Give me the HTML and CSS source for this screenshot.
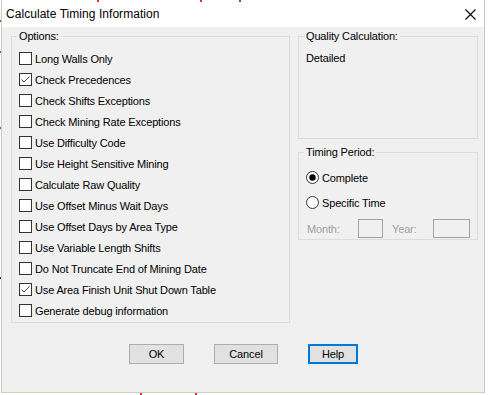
FILE: index.html
```html
<!DOCTYPE html>
<html lang="en">
<head>
    <meta charset="UTF-8">
    <meta name="viewport" content="width=device-width, initial-scale=1.0">
    <title>Calculate Timing Information</title>
    <link rel="stylesheet" href="styles.css">
</head>
<body>
    <div class="window">
        <div class="titlebar">
            <span class="title">Calculate Timing Information</span>
            <svg class="close" width="11" height="11" viewBox="0 0 11 11">
                <path d="M0.5 0.5 L10.5 10.5 M10.5 0.5 L0.5 10.5" stroke="#000" stroke-width="1.1" fill="none"/>
            </svg>
        </div>
        <div class="client">
            <div class="columns">
                <div class="group options">
                    <span class="group-title">Options:</span>
                    <div class="check-row"><span class="box"></span>Long Walls Only</div>
                    <div class="check-row"><span class="box checked"><svg width="11" height="11" viewBox="0 0 11 11"><path d="M1.5 5.5 L4 8 L9.5 2.5" stroke="#444" stroke-width="1" fill="none"/></svg></span>Check Precedences</div>
                    <div class="check-row"><span class="box"></span>Check Shifts Exceptions</div>
                    <div class="check-row"><span class="box"></span>Check Mining Rate Exceptions</div>
                    <div class="check-row"><span class="box"></span>Use Difficulty Code</div>
                    <div class="check-row"><span class="box"></span>Use Height Sensitive Mining</div>
                    <div class="check-row"><span class="box"></span>Calculate Raw Quality</div>
                    <div class="check-row"><span class="box"></span>Use Offset Minus Wait Days</div>
                    <div class="check-row"><span class="box"></span>Use Offset Days by Area Type</div>
                    <div class="check-row"><span class="box"></span>Use Variable Length Shifts</div>
                    <div class="check-row"><span class="box"></span>Do Not Truncate End of Mining Date</div>
                    <div class="check-row"><span class="box checked"><svg width="11" height="11" viewBox="0 0 11 11"><path d="M1.5 5.5 L4 8 L9.5 2.5" stroke="#444" stroke-width="1" fill="none"/></svg></span>Use Area Finish Unit Shut Down Table</div>
                    <div class="check-row"><span class="box"></span>Generate debug information</div>
                </div>
                <div class="side">
                    <div class="group quality">
                        <span class="group-title">Quality Calculation:</span>
                        <div class="quality-value">Detailed</div>
                    </div>
                    <div class="group timing">
                        <span class="group-title">Timing Period:</span>
                        <div class="radio-row">
                            <svg class="radio" width="13" height="13" viewBox="0 0 13 13">
                                <circle cx="6.5" cy="6.5" r="6" fill="#fff" stroke="#333" stroke-width="1"/>
                                <circle cx="6.5" cy="6.5" r="3.2" fill="#000"/>
                            </svg>
                            Complete
                        </div>
                        <div class="radio-row">
                            <svg class="radio" width="13" height="13" viewBox="0 0 13 13">
                                <circle cx="6.5" cy="6.5" r="6" fill="#fff" stroke="#333" stroke-width="1"/>
                            </svg>
                            Specific Time
                        </div>
                        <div class="period-row">
                            <span class="period-label month">Month:</span>
                            <span class="period-box small"></span>
                            <span class="period-label year">Year:</span>
                            <span class="period-box wide"></span>
                        </div>
                    </div>
                </div>
            </div>
            <div class="buttons">
                <button class="btn btn-ok">OK</button>
                <button class="btn btn-cancel">Cancel</button>
                <button class="btn btn-help">Help</button>
            </div>
        </div>
    </div>
    <span class="tick red" style="left:0;top:20px"></span>
    <span class="tick red" style="left:0;top:51px"></span>
    <span class="tick red" style="left:0;top:127px"></span>
    <span class="tick dark" style="left:0;top:277px"></span>
    <span class="tick-h red" style="left:97px;top:0"></span>
    <span class="tick-h red" style="left:200px;top:0"></span>
    <span class="tick-h red" style="left:239px;top:0"></span>
    <span class="tick-h red" style="left:140px;top:393px"></span>
    <span class="tick-h red" style="left:195px;top:393px"></span>
</body>
</html>
```

FILE: styles.css
```css
*{
    margin: 0;
    padding: 0;
    box-sizing: border-box;
}
body{
    background-color: #fff;
    font-family: "Liberation Sans", Arial, sans-serif;
    font-size: 11px;
    color: #000;
    position: relative;
    height: 395px;
    overflow: hidden;
}
.window{
    margin-left: 1px;
    width: 484px;
    height: 393px;
    border-left: 1px solid #c6cfbd;
    border-right: 1px solid #c3ccb9;
    border-bottom: 1px solid #c6d1b6;
    background-color: #f0f0f0;
    display: flex;
    flex-direction: column;
}
.titlebar{
    height: 27px;
    background-color: #fff;
    display: flex;
    align-items: center;
    justify-content: space-between;
    padding: 0 8px 0 4px;
}
.title{
    font-size: 12px;
    letter-spacing: 0.05px;
}
.close{
    display: block;
    margin-top: 1px;
}
.client{
    flex: 1;
    padding: 9px 6px 0 9px;
}
.columns{
    display: flex;
    column-gap: 8px;
}
.group{
    position: relative;
    border: 1px solid #dcdcdc;
    letter-spacing: -0.15px;
}
.group-title{
    position: absolute;
    top: -7px;
    left: 5px;
    padding: 0 2px;
    line-height: 13px;
    background-color: #f0f0f0;
}
.options{
    width: 279px;
    height: 287px;
    padding: 11px 0 0 7px;
}
.check-row{
    height: 21px;
    display: flex;
    align-items: center;
    column-gap: 3px;
    white-space: nowrap;
}
.box{
    width: 13px;
    height: 13px;
    border: 1px solid #333;
    background-color: #fff;
    flex-shrink: 0;
}
.box svg{
    display: block;
}
.side{
    width: 180px;
    display: flex;
    flex-direction: column;
    row-gap: 13px;
}
.quality{
    height: 103px;
    padding: 11px 0 0 7px;
}
.quality-value{
    line-height: 21px;
}
.timing{
    height: 88px;
    padding: 12px 0 0 7px;
}
.radio-row{
    height: 25px;
    display: flex;
    align-items: center;
    column-gap: 3px;
}
.radio{
    display: block;
    flex-shrink: 0;
}
.period-row{
    margin-top: 4px;
    height: 19px;
    display: flex;
    align-items: center;
}
.period-label{
    color: #a0a0a0;
    padding-left: 1px;
}
.month{
    width: 52px;
}
.year{
    width: 42px;
}
.period-box{
    height: 19px;
    border: 1px solid #a3a3a3;
    background-color: #f0f0f0;
}
.small{
    width: 25px;
    margin-right: 8px;
}
.wide{
    width: 37px;
}
.buttons{
    margin-top: 21px;
    padding-left: 118px;
    display: flex;
    column-gap: 30px;
}
.btn{
    height: 20px;
    font-family: "Liberation Sans", Arial, sans-serif;
    font-size: 11px;
    letter-spacing: -0.15px;
    color: #000;
    background-color: #e1e1e1;
    border: 1px solid #adadad;
}
.btn-ok{
    width: 55px;
}
.btn-cancel{
    width: 64px;
}
.btn-help{
    width: 50px;
    border: 2px solid #0078d7;
}
.tick, .tick-h{
    position: absolute;
    display: block;
}
.tick{
    width: 1px;
    height: 2px;
}
.tick-h{
    width: 2px;
    height: 2px;
}
.red{
    background-color: #e03030;
}
.dark{
    background-color: #333;
}
```
